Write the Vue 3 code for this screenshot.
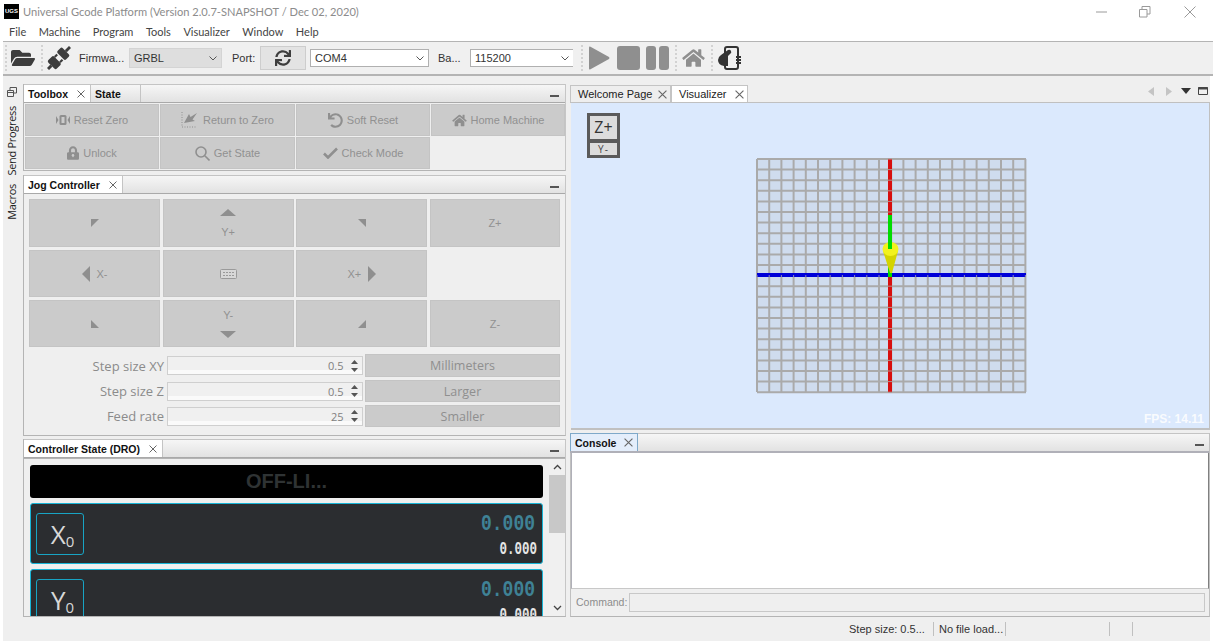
<script setup>
const menus = ['File', 'Machine', 'Program', 'Tools', 'Visualizer', 'Window', 'Help'];

const steps = [
  { label: 'Step size XY', value: '0.5', unit: 'Millimeters' },
  { label: 'Step size Z', value: '0.5', unit: 'Larger' },
  { label: 'Feed rate', value: '25', unit: 'Smaller' }
];

// grid of the visualizer, in viewport coordinates
const gridX = Array.from({ length: 23 }, (_, i) => 186 + i * 12.2);
const gridY = Array.from({ length: 23 }, (_, i) => 56 + i * 10.6);
</script>

<template>
  <div class="app">
    <div class="titlebar">
      <span class="logo">UGS</span>
      <span class="title">Universal Gcode Platform (Version 2.0.7-SNAPSHOT / Dec 02, 2020)</span>
      <div class="winbtns">
        <svg width="12" height="12" viewBox="0 0 12 12"><path d="M0 6h11" stroke="#9a9a9a" /></svg>
        <svg width="12" height="12" viewBox="0 0 12 12" fill="none" stroke="#9a9a9a"><path d="M.5 3.5h7.5v7.5h-7.5zM3 3V.5h8V8H8" /></svg>
        <svg width="12" height="12" viewBox="0 0 12 12"><path d="M.5.5l11 11M11.500.5l-11 11" stroke="#9a9a9a" /></svg>
      </div>
    </div>

    <div class="menubar">
      <span v-for="m in menus" :key="m">{{ m }}</span>
    </div>

    <div class="toolbar">
      <i class="grip first"></i>
      <svg class="tool folder" width="24" height="22" viewBox="0 0 576 512"><path fill="#3d3d3d" d="M572.694 292.093L500.27 416.248A63.997 63.997 0 0 1 444.989 448H45.025c-18.523 0-30.064-20.093-20.731-36.093l72.424-124.155A64 64 0 0 1 152 256h399.964c18.523 0 30.064 20.093 20.73 36.093zM152 224h328v-48c0-26.51-21.49-48-48-48H272l-64-64H48C21.49 64 0 85.49 0 112v278.046l69.077-118.418C86.214 242.250 117.989 224 152 224z" /></svg>
      <i class="grip second"></i>
      <svg class="tool plug" width="24" height="24" viewBox="2 2 20 20">
        <g transform="rotate(-45 12 12)" fill="#3d3d3d">
          <rect x="-1" y="10.800" width="4" height="2.400" />
          <rect x="3" y="7" width="7" height="10" rx="1.500" />
          <rect x="10" y="8" width="3" height="1.800" />
          <rect x="10" y="14.200" width="3" height="1.800" />
          <rect x="14" y="7" width="6" height="10" rx="1.500" />
          <rect x="20" y="10.800" width="5" height="2.400" />
        </g>
      </svg>
      <span class="tlabel firm">Firmwa...</span>
      <div class="combo grey">GRBL<svg width="8" height="5" viewBox="0 0 8 5"><path d="M.5.500L4 4 7.500.500" fill="none" stroke="#555" /></svg></div>
      <span class="tlabel port">Port:</span>
      <div class="refresh">
        <svg width="16" height="16" viewBox="0 0 512 512"><path fill="#3d3d3d" d="M440.65 12.57l4 82.77A247.16 247.16 0 0 0 255.83 8C134.73 8 33.91 94.92 12.29 209.82A12 12 0 0 0 24.09 224h49.05a12 12 0 0 0 11.67-9.26 175.91 175.91 0 0 1 317-56.94l-101.46-4.86a12 12 0 0 0-12.57 12v47.41a12 12 0 0 0 12 12H500a12 12 0 0 0 12-12V12a12 12 0 0 0-12-12h-47.37a12 12 0 0 0-11.98 12.57zM255.83 432a175.61 175.61 0 0 1-146-77.8l101.8 4.87a12 12 0 0 0 12.57-12v-47.4a12 12 0 0 0-12-12H12a12 12 0 0 0-12 12V500a12 12 0 0 0 12 12h47.35a12 12 0 0 0 12-12.6l-4.15-82.57A247.17 247.17 0 0 0 255.83 504c121.11 0 221.93-86.92 243.55-201.82a12 12 0 0 0-11.8-14.18h-49.05a12 12 0 0 0-11.67 9.26A175.86 175.86 0 0 1 255.83 432z" /></svg>
      </div>
      <div class="combo com">COM4<svg width="8" height="5" viewBox="0 0 8 5"><path d="M.5.500L4 4 7.500.500" fill="none" stroke="#555" /></svg></div>
      <span class="tlabel baud">Ba...</span>
      <div class="combo rate">115200<svg width="8" height="5" viewBox="0 0 8 5"><path d="M.5.500L4 4 7.500.500" fill="none" stroke="#555" /></svg></div>
      <i class="grip third"></i>
      <svg class="tool play" width="21" height="24" viewBox="0 0 21 24"><path fill="#8f8f8f" d="M0 1.500Q0 0 1.500 .8L20 11q1 1 0 2L1.500 23.200Q0 24 0 22.500z" /></svg>
      <svg class="tool stop" width="23" height="24" viewBox="0 0 23 24"><rect width="23" height="24" rx="3" fill="#8f8f8f" /></svg>
      <svg class="tool pause" width="23" height="24" viewBox="0 0 23 24"><rect width="10" height="24" rx="3" fill="#8f8f8f" /><rect x="13" width="10" height="24" rx="3" fill="#8f8f8f" /></svg>
      <i class="grip fourth"></i>
      <svg class="tool home" width="23" height="20" viewBox="0 0 576 512"><path fill="#8f8f8f" d="M280.37 148.26L96 300.11V464a16 16 0 0 0 16 16l112.06-.29a16 16 0 0 0 15.92-16V368a16 16 0 0 1 16-16h64a16 16 0 0 1 16 16v95.64a16 16 0 0 0 16 16.05L464 480a16 16 0 0 0 16-16V300L295.67 148.26a12.19 12.19 0 0 0-15.3 0zM571.6 251.47L488 182.56V44.05a12 12 0 0 0-12-12h-56a12 12 0 0 0-12 12v72.61L318.47 43a48 48 0 0 0-61 0L4.34 251.47a12 12 0 0 0-1.6 16.9l25.5 31A12 12 0 0 0 45.15 301l235.22-193.74a12.19 12.19 0 0 1 15.3 0L530.9 301a12 12 0 0 0 16.9-1.6l25.5-31a12 12 0 0 0-1.7-16.93z" /></svg>
      <i class="grip fifth"></i>
      <svg class="tool phone" width="23" height="24" viewBox="0 0 23 24">
        <rect x="7" y="1" width="13" height="22" rx="2" fill="none" stroke="#333" stroke-width="2" />
        <path fill="#333" d="M0 14q0-3 3-5l7-5q2-1 3 1t-1 3l-2 2v10H6q-6-1-6-6z" />
        <path stroke="#333" stroke-width="2" d="M18 11h5M18 14h5M18 17h5" />
      </svg>
    </div>

    <div class="main">
      <aside class="side">
        <svg width="10" height="10" viewBox="0 0 10 10" fill="none" stroke="#555"><path d="M.5 3.500h6v6h-6zM3 3V.5h6.500V6H7M.5 5.500h6" /></svg>
        <span class="vtab send">Send Progress</span>
        <span class="vtab">Macros</span>
      </aside>

      <div class="left">
        <section class="panel toolbox">
          <header class="strip">
            <div class="tab on"><b>Toolbox</b><svg class="x" width="8" height="8" viewBox="0 0 8 8"><path d="M.5.500l7 7M7.500.500l-7 7" /></svg></div>
            <div class="tab plain"><b>State</b></div>
            <i class="dash"></i>
          </header>
          <div class="toolgrid">
            <div class="btn">
              <svg width="14" height="12" viewBox="0 0 14 12" fill="#8f8f8f"><path d="M0 2l2.500 4L0 10zM14 2l-2.500 4 2.500 4z" /><rect x="3.500" y="1" width="7" height="10" rx="1.500" /><rect x="5.500" y="3" width="3" height="6" fill="#cbcbcb" /></svg>
              Reset Zero
            </div>
            <div class="btn">
              <svg width="18" height="18" viewBox="0 0 18 18" fill="#8f8f8f"><path d="M3 12L8 3l1.500 3L16 2l-4.500 6.500L14 10z" /><path d="M1 1v15h15" fill="none" stroke="#8f8f8f" stroke-dasharray="1 1.500" /></svg>
              Return to Zero
            </div>
            <div class="btn">
              <svg width="15" height="15" viewBox="0 0 512 512"><path fill="#8f8f8f" d="M212.333 224.333H12c-6.627 0-12-5.373-12-12V12C0 5.373 5.373 0 12 0h48c6.627 0 12 5.373 12 12v78.112C117.773 39.279 184.26 7.47 258.175 8.007c136.906.994 246.448 111.623 246.157 248.532C504.041 393.258 393.12 504 256.333 504c-64.089 0-122.496-24.313-166.51-64.215-5.099-4.622-5.334-12.554-.467-17.42l33.967-33.967c4.474-4.474 11.662-4.717 16.401-.525C170.76 415.336 211.58 432 256.333 432c97.268 0 176-78.716 176-176 0-97.267-78.716-176-176-176-58.496 0-110.28 28.476-142.274 72.333h98.274c6.627 0 12 5.373 12 12v48c0 6.627-5.373 12-12 12z" /></svg>
              Soft Reset
            </div>
            <div class="btn">
              <svg width="15" height="13" viewBox="0 0 576 512"><path fill="#8f8f8f" d="M280.37 148.26L96 300.11V464a16 16 0 0 0 16 16l112.06-.29a16 16 0 0 0 15.92-16V368a16 16 0 0 1 16-16h64a16 16 0 0 1 16 16v95.64a16 16 0 0 0 16 16.05L464 480a16 16 0 0 0 16-16V300L295.67 148.26a12.19 12.19 0 0 0-15.3 0zM571.6 251.47L488 182.56V44.05a12 12 0 0 0-12-12h-56a12 12 0 0 0-12 12v72.61L318.47 43a48 48 0 0 0-61 0L4.34 251.47a12 12 0 0 0-1.6 16.9l25.5 31A12 12 0 0 0 45.15 301l235.22-193.74a12.19 12.19 0 0 1 15.3 0L530.9 301a12 12 0 0 0 16.9-1.6l25.5-31a12 12 0 0 0-1.7-16.93z" /></svg>
              Home Machine
            </div>
            <div class="btn">
              <svg width="12" height="14" viewBox="0 0 448 512"><path fill="#8f8f8f" d="M400 224h-24v-72C376 68.2 307.8 0 224 0S72 68.2 72 152v72H48c-26.5 0-48 21.5-48 48v192c0 26.500 21.5 48 48 48h352c26.500 0 48-21.5 48-48V272c0-26.500-21.500-48-48-48zm-104 0H152v-72c0-39.7 32.3-72 72-72s72 32.300 72 72v72z" /><circle cx="224" cy="340" r="46" fill="#cbcbcb" /><rect x="204" y="340" width="40" height="70" fill="#cbcbcb" /></svg>
              Unlock
            </div>
            <div class="btn">
              <svg width="15" height="15" viewBox="0 0 15 15" fill="none" stroke="#8f8f8f" stroke-width="1.600"><circle cx="6" cy="6" r="5" /><path d="M9.800 9.800L14.500 14.500" /></svg>
              Get State
            </div>
            <div class="btn">
              <svg width="15" height="12" viewBox="0 0 15 12" fill="none" stroke="#8f8f8f" stroke-width="2.600"><path d="M1 6.500l4 4L14 1.500" /></svg>
              Check Mode
            </div>
          </div>
        </section>

        <section class="panel jog">
          <header class="strip">
            <div class="tab on"><b>Jog Controller</b><svg class="x" width="8" height="8" viewBox="0 0 8 8"><path d="M.5.500l7 7M7.500.500l-7 7" /></svg></div>
            <i class="dash"></i>
          </header>
          <div class="jogbody">
            <div class="joggrid">
              <div class="btn"><svg width="8" height="8" viewBox="0 0 8 8"><path fill="#8f8f8f" d="M0 0h8L0 8z" /></svg></div>
              <div class="btn col">
                <svg width="16" height="7" viewBox="0 0 16 7"><path fill="#8f8f8f" d="M8 0l8 7H0z" /></svg>
                <span>Y+</span>
              </div>
              <div class="btn"><svg width="8" height="8" viewBox="0 0 8 8"><path fill="#8f8f8f" d="M0 0h8v8z" /></svg></div>
              <div class="btn">Z+</div>
              <div class="btn">
                <svg width="8" height="16" viewBox="0 0 8 16"><path fill="#8f8f8f" d="M0 8l8-8v16z" /></svg>
                <span>X-</span>
              </div>
              <div class="btn">
                <svg width="17" height="10" viewBox="0 0 17 10" fill="none" stroke="#9a9a9a"><rect x=".5" y=".5" width="16" height="9" rx="1" fill="#d8d8d8" /><path d="M3 3.500h11M3 6.500h11" stroke-dasharray="2 1" /></svg>
              </div>
              <div class="btn">
                <span>X+</span>
                <svg width="8" height="16" viewBox="0 0 8 16"><path fill="#8f8f8f" d="M8 8L0 0v16z" /></svg>
              </div>
              <div class="blank"></div>
              <div class="btn"><svg width="8" height="8" viewBox="0 0 8 8"><path fill="#8f8f8f" d="M0 0l8 8H0z" /></svg></div>
              <div class="btn col">
                <span>Y-</span>
                <svg width="16" height="7" viewBox="0 0 16 7"><path fill="#8f8f8f" d="M0 0h16L8 7z" /></svg>
              </div>
              <div class="btn"><svg width="8" height="8" viewBox="0 0 8 8"><path fill="#8f8f8f" d="M8 0v8H0z" /></svg></div>
              <div class="btn">Z-</div>
            </div>

            <div class="stepgrid">
              <template v-for="s in steps" :key="s.label">
                <label class="steplabel">{{ s.label }}</label>
                <div class="spin">
                  <span class="val">{{ s.value }}</span>
                  <span class="arrows">
                    <svg width="7" height="4" viewBox="0 0 7 4"><path fill="#555" d="M3.500 0L7 4H0z" /></svg>
                    <svg width="7" height="4" viewBox="0 0 7 4"><path fill="#555" d="M0 0h7L3.500 4z" /></svg>
                  </span>
                </div>
                <div class="btn big">{{ s.unit }}</div>
              </template>
            </div>
          </div>
        </section>

        <section class="panel dro">
          <header class="strip">
            <div class="tab on"><b>Controller State (DRO)</b><svg class="x" width="8" height="8" viewBox="0 0 8 8"><path d="M.5.500l7 7M7.500.500l-7 7" /></svg></div>
            <i class="dash"></i>
          </header>
          <div class="drobody">
            <div class="readouts">
              <div class="state">OFF-LI...</div>
              <div class="axis">
                <div class="axisname">X<sub>0</sub></div>
                <div class="coords"><span class="work">0.000</span><span class="mach">0.000</span></div>
              </div>
              <div class="axis">
                <div class="axisname">Y<sub>0</sub></div>
                <div class="coords"><span class="work">0.000</span><span class="mach">0.000</span></div>
              </div>
            </div>
            <div class="scroll">
              <svg width="9" height="6" viewBox="0 0 9 6"><path d="M1 5l3.500-3.500L8 5" fill="none" stroke="#444" stroke-width="1.300" /></svg>
              <div class="track"><div class="thumb"></div></div>
              <svg width="9" height="6" viewBox="0 0 9 6"><path d="M1 1l3.500 3.500L8 1" fill="none" stroke="#444" stroke-width="1.300" /></svg>
            </div>
          </div>
        </section>
      </div>

      <div class="right">
        <section class="viz">
          <header class="doctabs">
            <div class="doctab">Welcome Page<svg class="x" width="9" height="9" viewBox="0 0 8 8"><path d="M.5.500l7 7M7.500.500l-7 7" /></svg></div>
            <div class="doctab on">Visualizer<svg class="x" width="9" height="9" viewBox="0 0 8 8"><path d="M.5.500l7 7M7.500.500l-7 7" /></svg></div>
            <div class="tabnav">
              <svg width="6" height="9" viewBox="0 0 6 9"><path fill="#c4c4c4" d="M0 4.500L6 0v9z" /></svg>
              <svg class="nav2" width="6" height="9" viewBox="0 0 6 9"><path fill="#c4c4c4" d="M6 4.500L0 0v9z" /></svg>
              <svg class="nav3" width="10" height="6" viewBox="0 0 10 6"><path fill="#333" d="M0 0h10L5 6z" /></svg>
              <svg class="nav4" width="10" height="8" viewBox="0 0 10 8" fill="none" stroke="#444"><path d="M.5.500h9v7h-9z" /><path d="M0 1.500h10" stroke-width="2" /></svg>
            </div>
          </header>
          <div class="viewport">
            <svg class="scene" width="638" height="326" viewBox="0 0 638 326">
              <rect x="186" y="56" width="269" height="233" fill="#cfdcee" />
              <line v-for="x in gridX" :key="'x' + x" :x1="x" :x2="x" y1="56" y2="289" stroke="#aaaaaa" stroke-width="2" />
              <line v-for="y in gridY" :key="'y' + y" x1="186" x2="455" :y1="y" :y2="y" stroke="#aaaaaa" stroke-width="2" />
              <rect x="317" y="56" width="4" height="233" fill="#d70f0f" />
              <rect x="186" y="170" width="269" height="4" fill="#0000d8" />
              <line v-for="y in gridY" :key="'r' + y" x1="317" x2="321" :y1="y" :y2="y" stroke="#b59090" stroke-width="1" />
              <line v-for="x in gridX" :key="'b' + x" :x1="x" :x2="x" y1="172" y2="174" stroke="#8a8ab8" stroke-width="1" />
              <rect x="317" y="112" width="4" height="62" fill="#00dc00" />
              <path d="M312 148l7 22 2 0 6-22z" fill="#d4d400" />
              <ellipse cx="319.500" cy="146" rx="8" ry="7" fill="#f2f21c" />
              <rect x="317" y="112" width="4" height="34" fill="#00dc00" />
            </svg>
            <div class="cube">
              <div class="cubetop">Z+</div>
              <div class="cubebot">Y-</div>
            </div>
            <div class="fps">FPS: 14.11</div>
          </div>
        </section>

        <section class="console">
          <header class="strip">
            <div class="tab focus"><b>Console</b><svg class="x" width="9" height="9" viewBox="0 0 8 8"><path d="M.5.500l7 7M7.500.500l-7 7" /></svg></div>
            <i class="dash"></i>
          </header>
          <div class="output"></div>
          <div class="cmdrow">
            <span>Command:</span>
            <div class="cmdinput"></div>
          </div>
        </section>
      </div>
    </div>

    <footer class="status">
      <span class="cell stepcell">Step size: 0.5...</span>
      <span class="cell filecell">No file load...</span>
      <span class="cell empty"></span>
      <span class="cell tiny"></span>
    </footer>
  </div>
</template>

<style scoped>
.app {
  width: 1214px;
  height: 643px;
  background: #fff;
  overflow: hidden;
  display: flex;
  flex-direction: column;
  font-family: "Open Sans", "Noto Sans", sans-serif;
  color: #333;
}

.titlebar {
  height: 23px;
  display: flex;
  align-items: center;
  padding-left: 4px;
}
.logo {
  width: 15px;
  height: 15px;
  background: #000;
  color: #fff;
  font: bold 6px/15px "Liberation Sans", sans-serif;
  text-align: center;
  margin-right: 4px;
}
.title {
  font: 11.1px Lato, sans-serif;
  color: #8c8c8c;
}
.winbtns {
  margin-left: auto;
  display: flex;
  gap: 33px;
  margin-right: 18px;
}
.winbtns svg:first-child { margin-right: -2px; }

.menubar {
  height: 18px;
  display: flex;
  gap: 12.5px;
  padding-left: 9px;
  font: 11px/18px Lato, sans-serif;
  color: #444;
}

.toolbar {
  height: 35px;
  margin: 0 1px 0 3px;
  background: #f0f0f0;
  border-top: 1px solid #b4b4b4;
  border-bottom: 2px solid #b4b4b4;
  box-sizing: border-box;
  display: flex;
  align-items: center;
  font: 11px "Liberation Sans", sans-serif;
}
.grip {
  width: 0;
  height: 26px;
  border-left: 2px dotted #d2d2d2;
  flex: none;
}
.grip.first { margin-left: 2px; }
.grip.second { margin-left: 6px; }
.grip.third { margin-left: 8px; }
.grip.fourth { margin-left: 6px; }
.grip.fifth { margin-left: 6px; }
.tool { flex: none; }
.folder { margin-left: 4px; }
.plug { margin-left: 4px; }
.play { margin-left: 6px; }
.stop { margin-left: 7px; }
.pause { margin-left: 6px; }
.home { margin-left: 5px; }
.phone { margin-left: 5px; }
.tlabel { color: #333; white-space: nowrap; flex: none; }
.firm { margin-left: 8px; width: 50px; }
.port { margin-left: 10px; width: 28px; }
.baud { margin-left: 9px; width: 32px; }
.combo {
  height: 18px;
  box-sizing: border-box;
  border: 1px solid #b0b0b0;
  background: #fff;
  display: flex;
  align-items: center;
  justify-content: space-between;
  padding: 0 4px;
  flex: none;
  font-size: 11px;
}
.combo.grey {
  width: 93px;
  height: 20px;
  background: #dedede;
  border-color: #d4d4d4;
}
.combo.com { width: 119px; margin-left: 4px; }
.combo.rate { width: 103px; border-right: 0; }
.refresh {
  width: 46px;
  height: 24px;
  box-sizing: border-box;
  flex: none;
  background: #e3e3e3;
  border: 1px solid #cdcdcd;
  display: flex;
  align-items: center;
  justify-content: center;
}

.main {
  height: 541px;
  margin: 0 4px 0 3px;
  background: #efefef;
  display: flex;
  box-sizing: border-box;
  padding-top: 8px;
}
.side {
  width: 20px;
  flex: none;
  display: flex;
  flex-direction: column;
  align-items: center;
  padding: 3px 3px 0 0;
  box-sizing: border-box;
  color: #222;
}
.vtab {
  writing-mode: vertical-rl;
  transform: rotate(180deg);
  white-space: nowrap;
  font-size: 11px;
  letter-spacing: -0.3px;
  margin-top: 8px;
}
.vtab.send { margin-top: 9px; }

.left {
  width: 543px;
  flex: none;
  display: flex;
  flex-direction: column;
}
.panel {
  border-left: 1px solid #b4b4b4;
  border-right: 1px solid #c6c6c6;
  border-bottom: 1px solid #b4b4b4;
  box-sizing: border-box;
}
.toolbox { height: 87px; }
.jog { height: 261px; margin-top: 4px; }
.dro { height: 178px; margin-top: 3px; border-bottom: 2px solid #b4b4b4; }

.strip {
  height: 19px;
  box-sizing: border-box;
  display: flex;
  background: linear-gradient(#f6f6f6, #e2e2e2);
  border-top: 1px solid #c4c4c4;
  border-bottom: 1px solid #a9a9a9;
  position: relative;
}
.tab {
  display: flex;
  align-items: center;
  gap: 9px;
  padding: 0 5px 0 4px;
  font: 10.5px "Liberation Sans", sans-serif;
  color: #111;
  border-right: 1px solid #c4c4c4;
}
.tab.on { background: #fff; }
.tab.plain { width: 50px; box-sizing: border-box; }
.tab.focus {
  background: #e4eefb;
  border: 1px solid #7fa9c9;
  border-bottom: 0;
  margin-top: -1px;
  width: 68px;
  box-sizing: border-box;
  gap: 8px;
}
.x {
  fill: none;
  stroke: #666;
  flex: none;
}
.dash {
  position: absolute;
  right: 6px;
  top: 10px;
  width: 9px;
  height: 2px;
  background: #555;
}

.btn {
  background: #cbcbcb;
  box-shadow: inset 0 0 0 1px #c4c4c4;
  display: flex;
  align-items: center;
  justify-content: center;
  gap: 4px;
  color: #919191;
  font: 11px "Liberation Sans", sans-serif;
  white-space: nowrap;
}

.toolgrid {
  display: grid;
  grid-template-columns: 134px 135px 134px 134px;
  grid-auto-rows: 32px;
  gap: 1px;
  padding: 1px 1px 1px;
}

.jogbody { padding: 5px 5px 0; }
.joggrid {
  display: grid;
  grid-template-columns: 131px 131px 131px 130px;
  grid-template-rows: 48px 47px 47px;
  column-gap: 2.67px;
  row-gap: 3px;
}
.joggrid .btn { gap: 7px; }
.joggrid .btn.col {
  flex-direction: column;
  gap: 10px;
}
.stepgrid {
  display: grid;
  grid-template-columns: 135px 196px 195px;
  column-gap: 2.500px;
  grid-template-rows: 23px 22px 22px;
  row-gap: 3px;
  margin-top: 7px;
}
.steplabel {
  text-align: right;
  align-self: center;
  font-size: 13px;
  color: #8b8b8b;
}
.spin {
  height: 19px;
  align-self: center;
  box-sizing: border-box;
  border: 1px solid #cfcfcf;
  background: linear-gradient(#f0f0f0 75%, #fafafa 75%);
  display: flex;
  align-items: center;
  justify-content: flex-end;
  font-size: 11px;
  color: #808080;
}
.arrows {
  width: 15px;
  margin-left: 3px;
  display: flex;
  flex-direction: column;
  align-items: center;
  gap: 4px;
}
.btn.big {
  font: 12.5px "Open Sans", sans-serif;
  color: #8f8f8f;
}

.drobody {
  height: 157px;
  display: flex;
  background: #efefef;
  border-top: 1px solid #b4b4b4;
}
.readouts {
  flex: none;
  width: 525px;
  overflow: hidden;
  padding: 6px 0 0 6px;
  box-sizing: border-box;
}
.state {
  width: 513px;
  height: 33px;
  background: #000;
  border-radius: 3px;
  color: #2f3334;
  text-align: center;
  font: bold 20px/33px "Liberation Sans", sans-serif;
}
.axis {
  width: 513px;
  height: 61px;
  box-sizing: border-box;
  margin-top: 5px;
  background: #2b2d30;
  border: 1px solid #18b4d6;
  border-radius: 3px;
  display: flex;
  justify-content: space-between;
  padding: 9px 5px 0;
}
.axisname {
  width: 48px;
  height: 42px;
  box-sizing: border-box;
  border: 1px solid #18a4c4;
  border-radius: 3px;
  color: #d8d8d8;
  font: 26px/40px "Open Sans", sans-serif;
  text-align: center;
  padding-left: 5px;
}
.axisname sub {
  font-size: 15px;
  vertical-align: -3px;
  line-height: 0;
}
.coords {
  display: flex;
  flex-direction: column;
  align-items: flex-end;
  font-family: "Liberation Mono", monospace;
}
.work {
  color: #3f8296;
  font-size: 18px;
  font-weight: bold;
  line-height: 22px;
  margin-right: 2px;
  transform: scaleY(1.200);
}
.mach {
  color: #e6e6e6;
  font-size: 12.5px;
  font-weight: bold;
  line-height: 16px;
  margin-top: 7px;
  transform: scaleY(1.400);
}
.scroll {
  width: 16px;
  display: flex;
  flex-direction: column;
  align-items: center;
  background: #f0f0f0;
  padding-top: 5px;
  box-sizing: border-box;
}
.track {
  flex: 1;
  width: 100%;
  margin: 5px 0;
}
.thumb {
  height: 58px;
  background: #c8c8c8;
}
.scroll svg:last-child { margin-bottom: 5px; }

.right {
  width: 640px;
  margin-left: 4px;
  flex: none;
  display: flex;
  flex-direction: column;
}
.viz { height: 346px; display: flex; flex-direction: column; }
.doctabs {
  height: 18px;
  margin-top: 1px;
  display: flex;
  align-items: stretch;
  border-bottom: 1px solid #c0c0c0;
  flex: none;
  box-sizing: border-box;
}
.doctab {
  display: flex;
  align-items: center;
  justify-content: space-between;
  padding: 0 3px 0 7px;
  width: 101px;
  box-sizing: border-box;
  background: #eeeeee;
  border: 1px solid #c4c4c4;
  border-bottom: 0;
  font: 11px "Liberation Sans", sans-serif;
  color: #222;
  white-space: nowrap;
}
.doctab.on {
  width: 77px;
  background: #fff;
}
.tabnav {
  margin-left: auto;
  display: flex;
  align-items: center;
  padding: 0 2px 5px 0;
}
.nav2 { margin-left: 12px; }
.nav3 { margin-left: 9px; }
.nav4 { margin-left: 7px; }
.viewport {
  flex: 1;
  position: relative;
  background: #dbe9fd;
  margin-left: 1px;
  border-right: 1px solid #c0c0c0;
  border-bottom: 2px solid #c0c0c0;
  box-sizing: border-box;
  overflow: hidden;
}
.scene { display: block; }
.cube {
  position: absolute;
  left: 16px;
  top: 10px;
  width: 33px;
  height: 45px;
  box-sizing: border-box;
  background: #5a5a5a;
  padding: 3px;
  display: flex;
  flex-direction: column;
  gap: 4px;
  font-family: "Open Sans", sans-serif;
}
.cubetop {
  height: 23px;
  background: #dcdcdc;
  color: #333;
  font-size: 16px;
  line-height: 23px;
  text-align: center;
}
.cubebot {
  height: 12px;
  background: #dcdcdc;
  color: #444;
  font-size: 10px;
  line-height: 12px;
  text-align: center;
  letter-spacing: 1px;
}
.fps {
  position: absolute;
  right: 5px;
  bottom: 2px;
  color: #fff;
  font: bold 12px "Liberation Sans", sans-serif;
  opacity: .85;
}

.console {
  height: 186px;
  margin-top: 3px;
  display: flex;
  flex-direction: column;
  border-right: 1px solid #c0c0c0;
  border-left: 1px solid #c0c0c0;
  border-bottom: 1px solid #b4b4b4;
  box-sizing: border-box;
}
.console .strip {
  flex: none;
  height: 20px;
  margin-left: -1px;
  border-bottom: 2px solid #b0b0b8;
}
.console .dash { top: 10px; right: 5px; }
.output {
  height: 136px;
  flex: none;
  background: #fff;
  border-left: 1px solid #b0b0b8;
  border-right: 1px solid #808080;
  border-bottom: 1px solid #c8c8c8;
  box-sizing: border-box;
}
.cmdrow {
  flex: 1;
  display: flex;
  align-items: center;
  gap: 2px;
  padding: 0 4px 1px 5px;
  font: 10.5px "Liberation Sans", sans-serif;
  color: #8c8c8c;
}
.cmdinput {
  flex: 1;
  height: 19px;
  box-sizing: border-box;
  border: 1px solid #c8c8c8;
}

.status {
  height: 24px;
  margin: 0 4px 2px 3px;
  background: #efefef;
  display: flex;
  align-items: center;
  font: 11px "Liberation Sans", sans-serif;
  color: #333;
  padding-left: 846px;
  box-sizing: border-box;
}
.cell {
  height: 14px;
  line-height: 14px;
  border-right: 1px solid #c0c0c0;
  white-space: nowrap;
  box-sizing: border-box;
  flex: none;
  overflow: hidden;
}
.stepcell { width: 85px; }
.filecell { width: 72px; padding-left: 5px; }
.empty { width: 104px; }
.tiny { width: 23px; }
</style>
